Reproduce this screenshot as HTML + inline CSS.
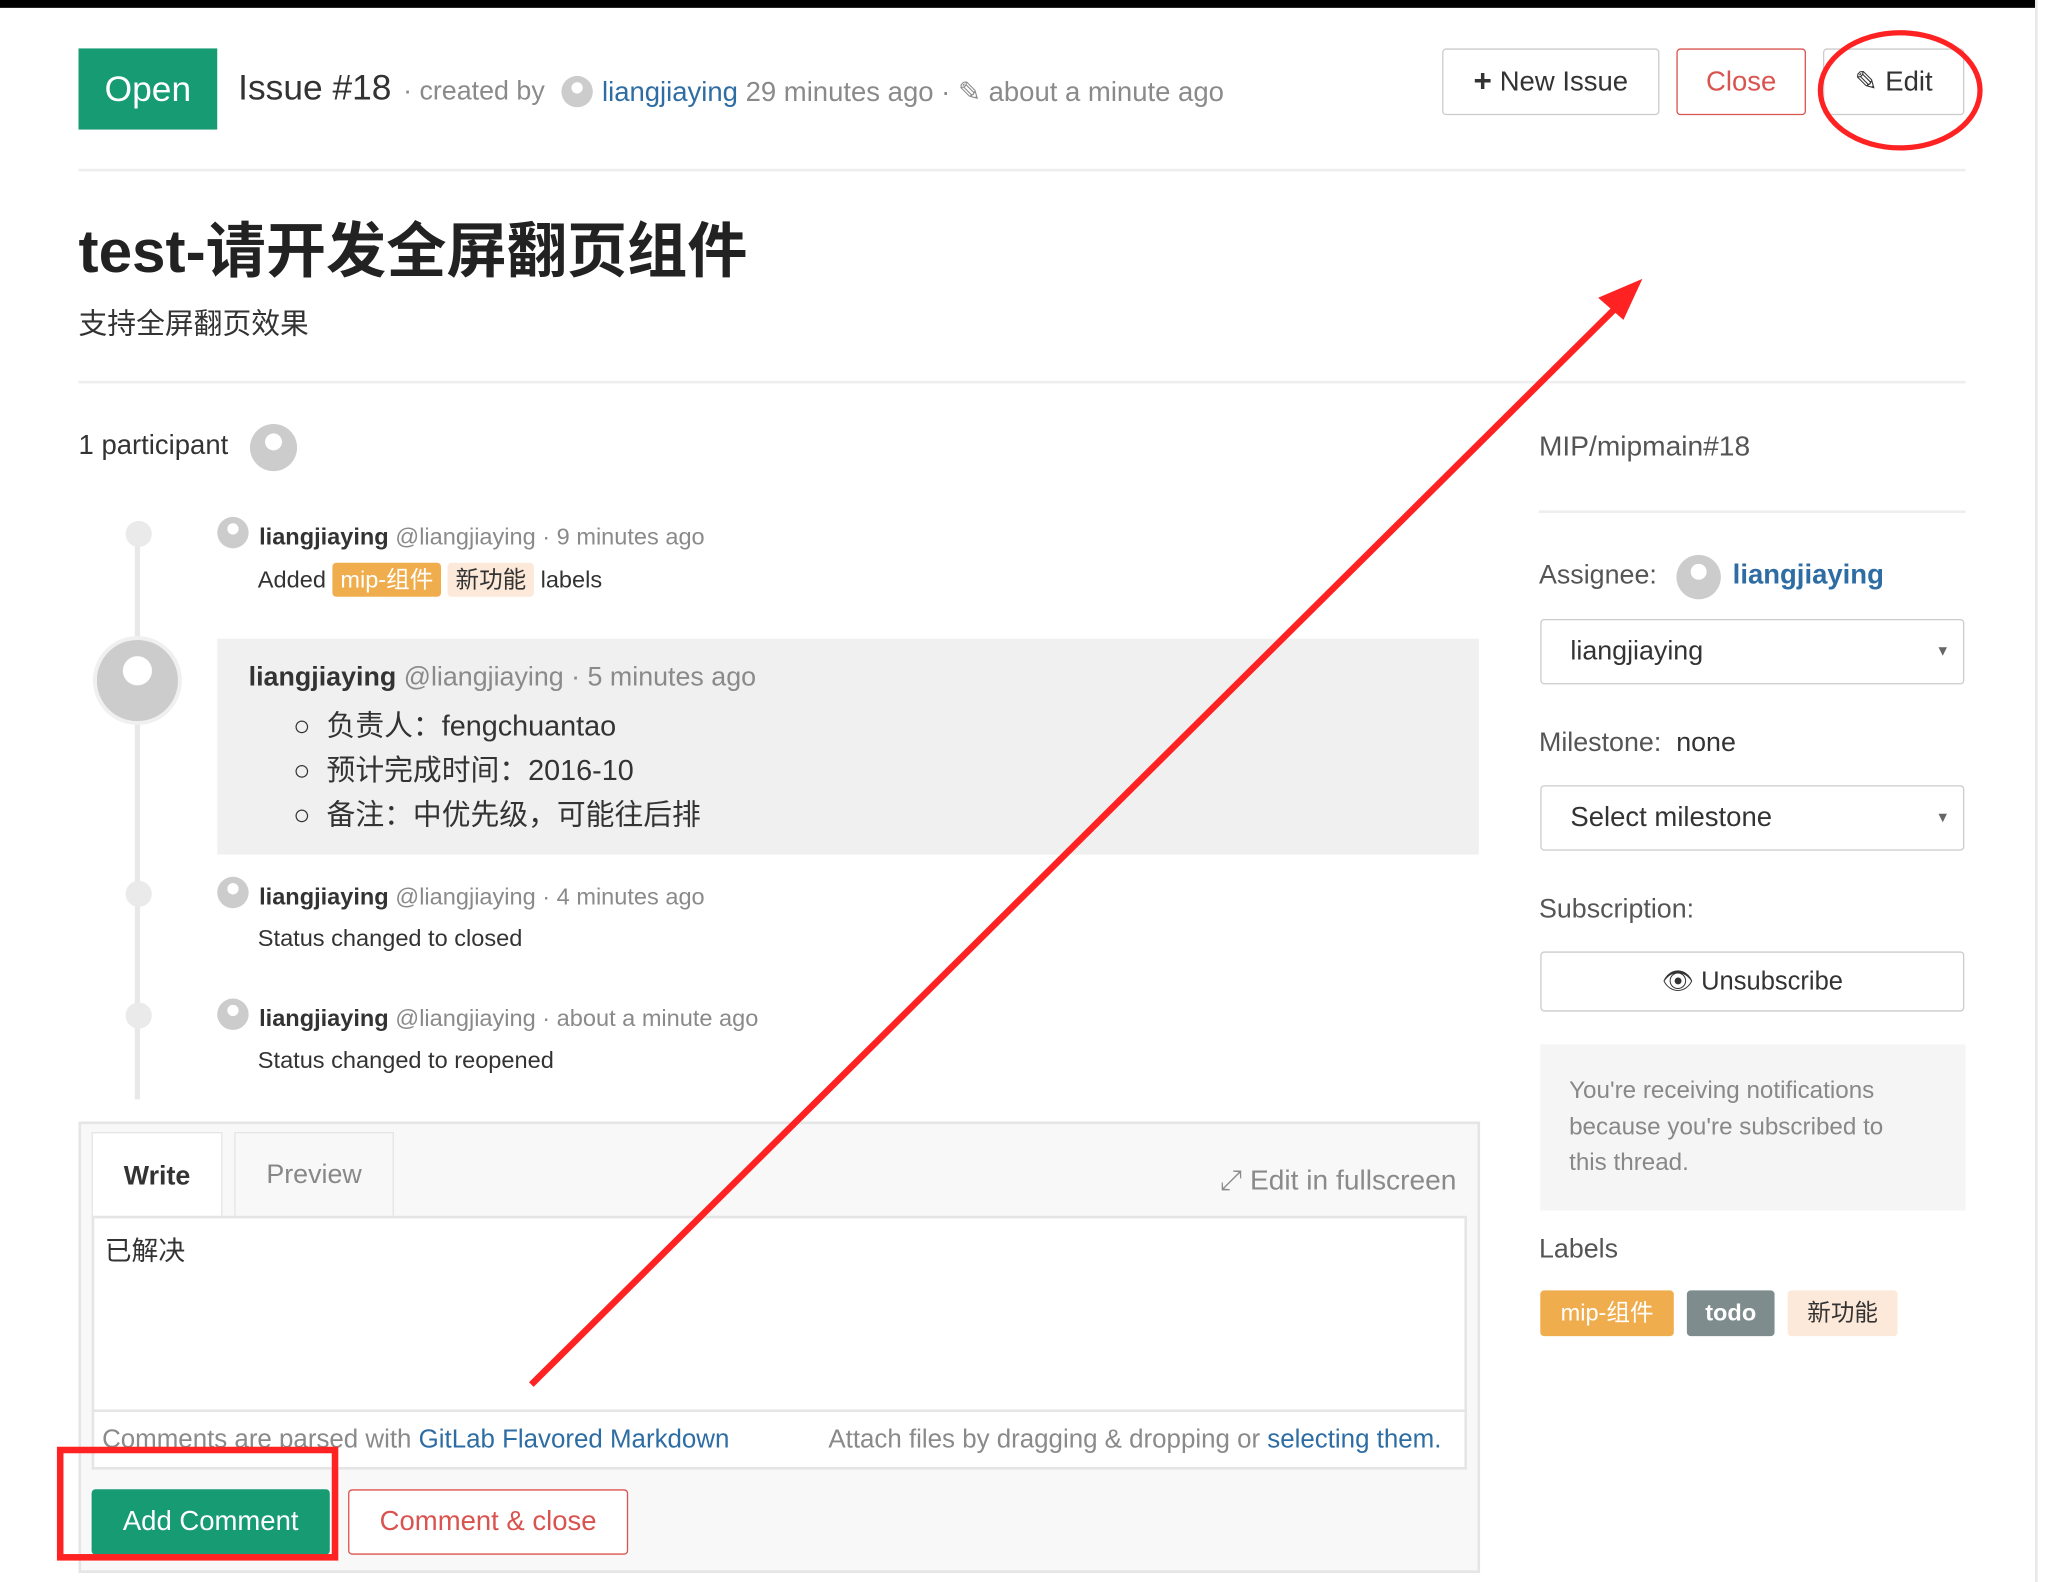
<!DOCTYPE html>
<html><head><meta charset="utf-8"><style>
*{box-sizing:border-box;margin:0;padding:0}
html,body{width:2052px;height:1582px;overflow:hidden;background:#fff}
#w{position:absolute;left:0;top:0;width:1568px;height:1209px;transform:scale(1.30867);transform-origin:0 0;font-family:"Liberation Sans","Noto Sans CJK SC",sans-serif;color:#333}
.a{position:absolute;white-space:nowrap}
.g{color:#8a8a8a}.b{color:#2e6da4}
.av{position:absolute;border-radius:50%;background:radial-gradient(circle at 50% 38%,#fff 0 22%,#ccc 23% 100%)}
.btn{position:absolute;border:1px solid #ccc;border-radius:3px;background:#fff;font-size:21px;display:flex;align-items:center;justify-content:center}
.lab{display:inline-block;border-radius:3px;padding:0 6px;font-size:18px;line-height:26px}
.hr{position:absolute;left:60px;width:1442px;height:2px;background:#eee}
.dot{position:absolute;left:96px;width:20px;height:20px;border-radius:50%;background:#eaeaea}
.ev{position:absolute;font-size:18px}
</style></head><body><div id="w">
<div class="a" style="left:0;top:0;width:1556px;height:6px;background:#000"></div>
<div class="a" style="left:1555px;top:0;width:2px;height:1209px;background:#e8e8e8"></div>
<div class="a" style="left:60px;top:37px;width:106px;height:62px;background:#179b73;color:#fff;font-size:27px;display:flex;align-items:center;justify-content:center">Open</div>
<div class="a" style="left:182px;top:52px;font-size:27px">Issue #18</div>
<div class="a g" style="left:308px;top:58px;font-size:20.5px">· created by</div>
<div class="av" style="left:429px;top:58px;width:24px;height:24px"></div>
<div class="a g" style="left:460px;top:58px;font-size:21px"><span class="b">liangjiaying</span> 29 minutes ago · ✎ about a minute ago</div>
<div class="btn" style="left:1102px;top:37px;width:166px;height:51px"><b style="font-size:24px;margin-right:6px">+</b>New Issue</div>
<div class="btn" style="left:1281px;top:37px;width:99px;height:51px;border-color:#d9534f;color:#d9534f">Close</div>
<div class="btn" style="left:1393px;top:37px;width:108px;height:51px">✎ Edit</div>
<div class="hr" style="top:129px"></div>
<div class="a" style="left:60px;top:156px;font-size:46px;font-weight:bold;color:#222">test-请开发全屏翻页组件</div>
<div class="a" style="left:60px;top:230px;font-size:22px">支持全屏翻页效果</div>
<div class="hr" style="top:291px"></div>
<div class="a" style="left:60px;top:329px;font-size:21px">1 participant</div>
<div class="av" style="left:191px;top:324px;width:36px;height:36px"></div>
<div class="a g" style="left:1176px;top:329px;font-size:21.5px;color:#555">MIP/mipmain#18</div>
<div class="a" style="left:1176px;top:390px;width:326px;height:2px;background:#eee"></div>
<div class="a" style="left:1176px;top:428px;font-size:20.5px;color:#555">Assignee:</div>
<div class="a" style="left:1324px;top:428px;font-size:21px"><b class="b">liangjiaying</b></div>
<div class="av" style="left:1281px;top:424px;width:34px;height:34px"></div>
<div class="btn" style="left:1177px;top:473px;width:324px;height:50px;justify-content:flex-start;padding-left:22px;font-size:20.5px">liangjiaying<span style="position:absolute;right:10px;font-size:11px;color:#666">▼</span></div>
<div class="a" style="left:1176px;top:556px;font-size:20.5px;color:#555">Milestone: <span style="color:#333">&nbsp;none</span></div>
<div class="btn" style="left:1177px;top:600px;width:324px;height:50px;justify-content:flex-start;padding-left:22px;font-size:21px">Select milestone<span style="position:absolute;right:10px;font-size:11px;color:#666">▼</span></div>
<div class="a" style="left:1176px;top:683px;font-size:20.5px;color:#555">Subscription:</div>
<div class="btn" style="left:1177px;top:727px;width:324px;height:46px;font-size:19.5px">👁&nbsp;Unsubscribe</div>
<div class="a" style="left:1177px;top:798px;width:325px;height:127px;background:#f5f5f5;padding:21px 30px 0 22px;font-size:18.5px;line-height:27.5px;color:#888;white-space:normal">You're receiving notifications because you're subscribed to this thread.</div>
<div class="a" style="left:1176px;top:943px;font-size:20.5px;color:#555">Labels</div>
<div class="a" style="left:1177px;top:986px;display:flex;gap:10px">
<span class="lab" style="background:#f0ad4e;color:#fff;line-height:35px;width:102px;text-align:center">mip-组件</span>
<span class="lab" style="background:#7f8c8d;color:#fff;line-height:35px;width:67px;text-align:center;font-weight:bold">todo</span>
<span class="lab" style="background:#fde9d9;color:#333;line-height:35px;width:84px;text-align:center">新功能</span></div>
<div class="a" style="left:103px;top:400px;width:4px;height:440px;background:#e8e8e8"></div>
<div class="dot" style="top:398px"></div><div class="dot" style="top:673px"></div><div class="dot" style="top:766px"></div>
<div class="av" style="left:166px;top:395px;width:24px;height:24px"></div>
<div class="ev" style="left:198px;top:400px"><b>liangjiaying</b> <span class="g">@liangjiaying · 9 minutes ago</span></div>
<div class="ev" style="left:197px;top:430px">Added <span class="lab" style="background:#f0ad4e;color:#fff">mip-组件</span> <span class="lab" style="background:#fde9d9">新功能</span> labels</div>
<div class="av" style="left:71px;top:486px;width:68px;height:68px;border:3px solid #f0f0f0"></div>
<div class="a" style="left:166px;top:488px;width:964px;height:165px;background:#f0f0f0"></div>
<div class="a" style="left:190px;top:506px;font-size:20.5px"><b>liangjiaying</b> <span class="g">@liangjiaying · 5 minutes ago</span></div>
<div class="a" style="left:224px;top:538px;font-size:22px;line-height:34px">
<div>○&nbsp; 负责人：fengchuantao</div><div>○&nbsp; 预计完成时间：2016-10</div><div>○&nbsp; 备注：中优先级，可能往后排</div></div>
<div class="av" style="left:166px;top:670px;width:24px;height:24px"></div>
<div class="ev" style="left:198px;top:675px"><b>liangjiaying</b> <span class="g">@liangjiaying · 4 minutes ago</span></div>
<div class="ev" style="left:197px;top:707px">Status changed to closed</div>
<div class="av" style="left:166px;top:763px;width:24px;height:24px"></div>
<div class="ev" style="left:198px;top:768px"><b>liangjiaying</b> <span class="g">@liangjiaying · about a minute ago</span></div>
<div class="ev" style="left:197px;top:800px">Status changed to reopened</div>
<div class="a" style="left:60px;top:857px;width:1071px;height:345px;background:#f8f8f8;border:2px solid #e5e5e5"></div>
<div class="a" style="left:70px;top:865px;width:100px;height:66px;background:#fff;border:1px solid #e5e5e5;border-bottom:0;font-size:20.5px;font-weight:bold;display:flex;align-items:center;justify-content:center">Write</div>
<div class="a" style="left:179px;top:865px;width:122px;height:64px;border:1px solid #e5e5e5;border-bottom:0;font-size:20.5px;color:#888;display:flex;align-items:center;justify-content:center">Preview</div>
<div class="a g" style="left:932px;top:890px;font-size:21.5px">⤢ Edit in fullscreen</div>
<div class="a" style="left:70px;top:929px;width:1051px;height:150px;background:#fff;border:2px solid #e5e5e5;padding:8px 8px;font-size:20.5px">已解决</div>
<div class="a" style="left:70px;top:1079px;width:1051px;height:44px;background:#fff;border:2px solid #e5e5e5;border-top:0"></div>
<div class="a g" style="left:78px;top:1089px;font-size:19.8px">Comments are parsed with <span class="b">GitLab Flavored Markdown</span></div>
<div class="a g" style="left:633px;top:1089px;font-size:19.8px">Attach files by dragging &amp; dropping or <span class="b">selecting them.</span></div>
<div class="btn" style="left:70px;top:1138px;width:182px;height:50px;background:#179b73;border-color:#179b73;color:#fff">Add Comment</div>
<div class="btn" style="left:266px;top:1138px;width:214px;height:50px;border-color:#d9534f;color:#d9534f">Comment &amp; close</div>
<svg class="a" style="left:0;top:0" width="1568" height="1209">
<ellipse cx="1452" cy="69" rx="61" ry="44" fill="none" stroke="#f22" stroke-width="4"/>
<rect x="46" y="1108" width="210" height="82" fill="none" stroke="#f22" stroke-width="5"/>
<line x1="406" y1="1058" x2="1244" y2="226" stroke="#f22" stroke-width="5"/>
<path d="M1252 216 L1224 228 L1240 242 Z" fill="#f22" stroke="#f22" stroke-width="3"/>
</svg>
</div></body></html>
